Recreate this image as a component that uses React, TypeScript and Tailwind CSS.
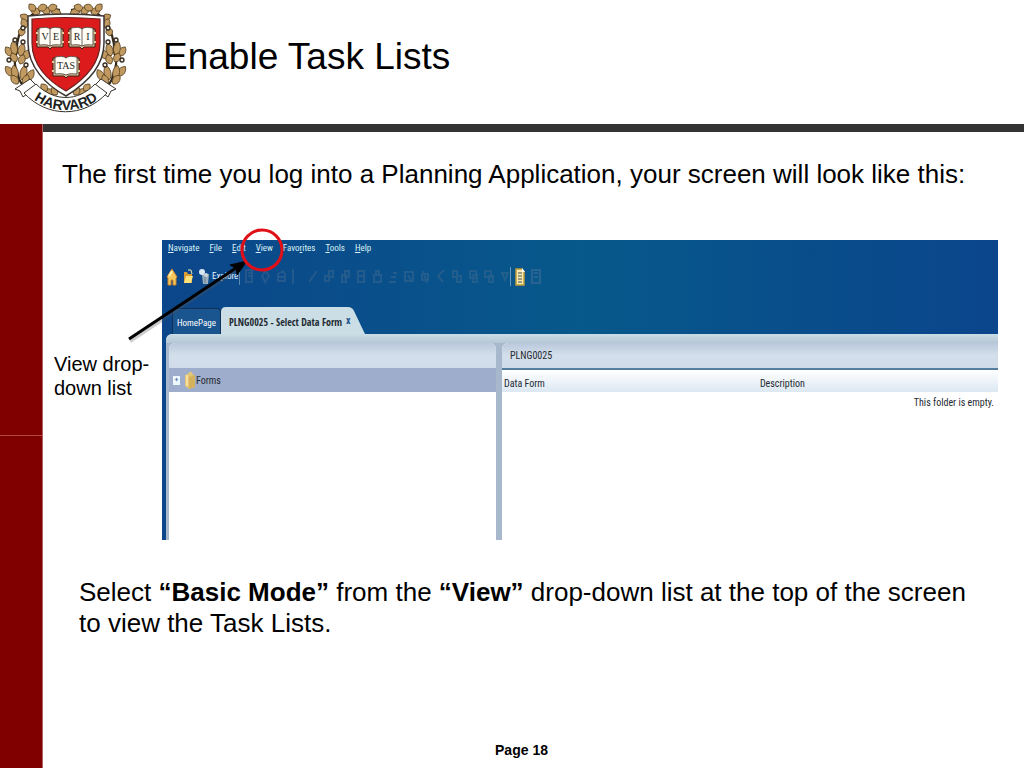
import type { ReactNode } from "react";

const NARROW = "font-['Roboto_Condensed','Liberation_Sans_Narrow','Open_Sans_Condensed_Light','Roboto',sans-serif]";

const MENU = [
  { before: "", key: "N", after: "avigate" },
  { before: "", key: "F", after: "ile" },
  { before: "", key: "E", after: "dit" },
  { before: "", key: "V", after: "iew" },
  { before: "Favo", key: "r", after: "ites" },
  { before: "", key: "T", after: "ools" },
  { before: "", key: "H", after: "elp" },
];

// x, y, rotation and length of each leaf on the left branch
const LEAVES = [
  [61, 14, -70, 11],
  [57, 6, -110, 10],
  [50, 13, -60, 10],
  [47, 6, -110, 10],
  [40, 13, -70, 10],
  [35, 11, -40, 9],
  [29, 20, -60, 10],
  [26, 28, -20, 10],
  [21, 36, 10, 9],
  [12, 56, -35, 11],
  [15, 55, -8, 14],
  [20, 56, 14, 13],
  [24, 59, 32, 11],
  [16, 62, -25, 10],
  [20, 64, 22, 10],
  [13, 76, -38, 12],
  [16, 79, -10, 14],
  [22, 80, 12, 15],
  [27, 81, 30, 13],
  [18, 84, -38, 11],
  [24, 85, 20, 11],
  [54, 94, -70, 11],
  [51, 97, -100, 10],
  [47, 91, -40, 9],
  [57, 95, -35, 9],
];

function Branch() {
  return (
    <g stroke="#5b4220" strokeWidth="0.8">
      <path
        d="M60 10C46 7 33 10 27 21C19 31 16 40 17 52C13 60 15 67 18 75C19 82 23 86 28 88"
        fill="none"
        stroke="#33291b"
        strokeWidth="2.2"
      />
      {LEAVES.map(([x, y, angle, length]) => (
        <path
          key={`${x}-${y}`}
          transform={`translate(${x} ${y}) rotate(${angle})`}
          d={`M0 0C-5 -3 -4 ${-length + 3} 0 ${-length}C4 ${-length + 3} 5 -3 0 0`}
          fill="#c09a60"
        />
      ))}
      <g fill="#f5ead8" stroke="#302a22" strokeWidth="1.3">
        <circle cx="23" cy="28" r="2" />
        <circle cx="15" cy="40" r="2" />
        <circle cx="23" cy="42" r="2" />
        <circle cx="9" cy="60" r="2" />
        <circle cx="26" cy="65" r="2" />
      </g>
    </g>
  );
}

function Book({ x, y, letters }: { x: number; y: number; letters: string[] }) {
  return (
    <g transform={`translate(${x} ${y})`}>
      <path d="M-13 -8H13V10H2L0 12L-2 10H-13Z" fill="#d8c59a" stroke="#3a211b" />
      <path
        d="M0 -8C-4 -11 -8 -9 -11 -9V8C-8 8 -4 7 0 9C4 7 8 8 11 8V-9C8 -9 4 -11 0 -8Z"
        fill="#fffdf5"
        stroke="#3b302a"
        strokeWidth="0.8"
      />
      {letters.length > 1 && <path d="M0 -8V9" stroke="#51443d" strokeWidth="0.8" />}
      <path d="M-14 -4H-12M-14 5H-12M12 -4H14M12 5H14" stroke="#e0cda0" strokeWidth="2" />
      {letters.map((letter, i) => (
        <text
          key={letter}
          x={letters.length > 1 ? i * 11 - 5 : 0}
          y="3"
          textAnchor="middle"
          className="font-['Liberation_Serif',serif] text-[10px]"
          fill="#252525"
        >
          {letter}
        </text>
      ))}
    </g>
  );
}

function Crest() {
  return (
    <svg viewBox="0 0 130 116" className="h-[116px] w-[130px] shrink-0" role="img" aria-label="Harvard crest">
      <Branch />
      <g transform="translate(131 0) scale(-1 1)">
        <Branch />
      </g>

      <path
        d="M28 16Q65 12 104 16V43C104 67 84 85 66 96C46 85 28 67 28 43Z"
        fill="#fff"
        stroke="#3b3634"
        strokeWidth="1.5"
      />
      <path
        d="M32 19Q65 16 100 19V43C100 65 82 81 66 91C48 81 32 65 32 43Z"
        fill="#dc1c1c"
        stroke="#682020"
        strokeWidth="1.2"
      />
      <Book x={50} y={37} letters={["V", "E"]} />
      <Book x={82} y={37} letters={["R", "I"]} />
      <Book x={66} y={66} letters={["TAS"]} />

      <g fill="#fff" stroke="#39342c" strokeWidth="1">
        <path d="M30 79L15 89L20 91L23 97L37 86ZM101 79L116 89L111 91L108 97L94 86Z" />
        <path d="M36 84C54 102 78 102 95 84L107 93C84 118 47 118 24 93Z" />
      </g>
      <path id="motto" d="M28 95C50 115 82 115 104 95" fill="none" />
      <text fill="#211f1e" className="font-['Liberation_Sans',sans-serif] text-[14px] font-bold">
        <textPath href="#motto" startOffset="50%" textAnchor="middle">
          HARVARD
        </textPath>
      </text>
    </svg>
  );
}

const FADED_ICONS = [
  "M2 2h6v12H2zM4 5h3M4 8h3",
  "M2 8l4-5 3 5-4 6z",
  "M2 6l5-3 2 3v7H2zM2 9h7",
  "M1 1v15",
  "M1 14L9 3",
  "M1 8h4v5H1zM5 3h4v6H5z",
  "M2 7h4v7H2zM5 3h4v6H5z",
  "M2 3h6v11H2zM3 8h6",
  "M2 7h7v7H2zM4 7V3h3v4",
  "M5 5h4M3 9h5M1 14h7",
  "M1 4h8v9H1zM4 7l4 7",
  "M2 6h6v6H2zM3 3l4 12",
  "M8 2L2 8l5 6",
  "M1 3h4v6H1zM5 8h4v6H5z",
  "M2 3h6v7H2zM5 7h4v7H5z",
  "M1 3h6v6H1zM5 8h4v6H5z",
  "M2 5h6L5 12z",
];

function Toolbar() {
  return (
    <div className="mt-[6px] flex h-6 items-center pl-1 text-[#e5f4ff]">
      <div className="flex items-center gap-1">
        <button aria-label="Home">
          <svg viewBox="0 0 12 20" className="h-5 w-3">
            <path d="M1 11L6 3l5 8-1 1v7H7v-5H5v5H2v-7Z" fill="#f7c95c" stroke="#c9842c" />
            <path d="M3 10L6 5" stroke="#fff2b7" strokeWidth="2" />
          </svg>
        </button>
        <button aria-label="Open">
          <svg viewBox="0 0 12 20" className="h-5 w-3">
            <path d="M2 6h3l1 2h4v9H2Z" fill="#d99c34" />
            <path d="M2 17l2-7h7l-2 7Z" fill="#ffe17a" />
            <path d="M6 4h3l1 4" fill="none" stroke="#e7e8ba" />
          </svg>
        </button>
        <button className="flex items-center">
          <svg viewBox="0 0 12 20" className="h-5 w-3">
            <path d="M4 8h7l-1 10H5Z" fill="#9dafbc" />
            <path d="M7 9v8" stroke="#607c98" />
            <circle cx="4" cy="6" r="3" fill="#d9e7f2" />
            <circle cx="8" cy="9" r="2" fill="#c9d5dc" />
          </svg>
          <span className="w-[29px] pl-[2px] text-left text-[9px] leading-4">Explore</span>
        </button>
      </div>

      <div className="flex items-center gap-[6px] border-l border-[#598bb0] pl-1" aria-hidden="true">
        {FADED_ICONS.map((d) => (
          <svg key={d} viewBox="0 0 10 17" className="h-[17px] w-[10px] opacity-40">
            <path d={d} fill="none" stroke="#4a6f90" strokeWidth="2" />
          </svg>
        ))}
      </div>

      <button aria-label="Task list" className="border-l border-[#6998ba] pl-1">
        <svg viewBox="0 0 10 19" className="h-[19px] w-[10px]">
          <path d="M1 2h6l2 3v13H1Z" fill="#f9e8aa" stroke="#bd9c3b" strokeWidth="1.5" />
          <path d="M3 6h4M3 9h4M3 12h4M3 15h4" stroke="#344f5c" />
          <path d="M7 1v4h3" fill="#fff" />
        </svg>
      </button>
      <svg viewBox="0 0 10 17" className="ml-[6px] h-[17px] w-[10px] opacity-50" aria-hidden="true">
        <path d="M1 2h8v13H1zM3 5h4M3 9h4" fill="none" stroke="#4a7298" strokeWidth="2" />
      </svg>
    </div>
  );
}

function Tabs() {
  return (
    <div className="mt-auto flex items-end pl-[10px]">
      <button className="h-[26px] w-[49px] rounded-t border border-b-0 border-[#103159] bg-[#1a5590] pt-1 text-[9px] text-white">
        HomePage
      </button>
      <div className="relative h-[27px] w-[144px] text-[#1e2b32]">
        <svg
          viewBox="0 0 144 27"
          preserveAspectRatio="none"
          className="absolute inset-0 h-full w-full"
          aria-hidden="true"
        >
          <path d="M0 27V5Q0 0 5 0H127Q131 0 133 4L144 27Z" fill="#cbdde5" />
        </svg>
        <div className="relative flex h-full items-center gap-1 pt-1 pl-2">
          <button className="font-['Open_Sans_Condensed',sans-serif] text-[10px] font-bold whitespace-nowrap">
            PLNG0025 - Select Data Form
          </button>
          <button aria-label="Close tab" className="pb-1 text-[10px] font-bold text-[#20558b]">
            x
          </button>
        </div>
      </div>
    </div>
  );
}

function Workspace() {
  return (
    <div
      className={`flex h-[300px] min-w-0 flex-1 flex-col bg-linear-to-r from-[#0c468a] via-[#07588b] to-[#0b458b] ${NARROW}`}
    >
      <nav className="flex h-[18px] items-center gap-[10px] pl-[6px] text-[9px] text-[#d9f1f5]">
        {MENU.map(({ before, key, after }) => (
          <button key={key}>
            {before}
            <u>{key}</u>
            {after}
          </button>
        ))}
      </nav>
      <Toolbar />
      <Tabs />

      <div className="ml-1 flex h-[206px] flex-col rounded-tl-md bg-[#a8b8cc]">
        <div className="h-[9px] shrink-0 rounded-tl-md bg-linear-to-b from-[#cbdde5] to-[#b4c6d5]" />
        <div className="flex min-h-0 flex-1 gap-[6px] pl-[3px] text-[10px] text-[#262a32]">
          <section className="flex w-[327px] shrink-0 flex-col overflow-hidden rounded-t-md bg-white">
            <div className="h-[25px] bg-linear-to-b from-[#bac8dc] via-[#d3dfeb] to-[#d0dce9]" />
            <div className="flex h-6 items-center gap-1 bg-[#9eadcb] pl-1">
              <button
                aria-label="Expand Forms"
                className="flex h-[9px] w-[7px] items-center justify-center bg-[#edf7ff] text-[8px] leading-none text-[#315989]"
              >
                +
              </button>
              <div className="flex items-center">
                <svg viewBox="0 0 12 19" className="h-[19px] w-3" aria-hidden="true">
                  <path d="M1 4l3-1 1-2h3l1 3 2 1v11l-6 2-4-3Z" fill="#e1c578" />
                  <path d="M5 6l6-2v12l-6 2Z" fill="#d4b35c" />
                  <path d="M3 4v11" stroke="#f7df9b" strokeWidth="2" />
                </svg>
                <span>Forms</span>
              </div>
            </div>
          </section>

          <section className="min-w-0 flex-1 overflow-hidden rounded-tl-md bg-white">
            <div className="flex h-[27px] items-center border-b-2 border-[#527e9f] bg-linear-to-b from-[#bac8dc] via-[#d3dfeb] to-[#cedbe8] pl-2">
              PLNG0025
            </div>
            <table className="w-full table-fixed text-left">
              <thead>
                <tr className="h-[22px] bg-linear-to-b from-white to-[#dce8f2]">
                  <th className="w-[52%] pt-1 pl-[2px] font-normal">Data Form</th>
                  <th className="pt-1 font-normal">Description</th>
                </tr>
              </thead>
              <tbody>
                <tr className="h-5">
                  <td colSpan={2} className="pr-1 text-right">
                    This folder is empty.
                  </td>
                </tr>
              </tbody>
            </table>
          </section>
        </div>
      </div>
    </div>
  );
}

// Ring and arrow that point out the View menu
function Callout() {
  return (
    <svg
      viewBox="0 0 240 124"
      className="pointer-events-none absolute -top-4 left-[66px] h-[124px] w-[240px]"
      aria-hidden="true"
    >
      <path d="M10 117L119 44" stroke="#555" strokeOpacity="0.3" strokeWidth="4" />
      <path d="M9 115L122 40" stroke="#000" strokeWidth="3" />
      <path d="M110 41L127 37L117 51L116 44Z" fill="#000" stroke="#000" />
      <circle cx="142" cy="26" r="20" fill="none" stroke="#e01018" strokeWidth="3" />
    </svg>
  );
}

function Paragraph({ className, children }: { className: string; children: ReactNode }) {
  return <p className={`text-[26px] leading-[31px] ${className}`}>{children}</p>;
}

export default function App() {
  return (
    <div className="flex min-h-screen flex-col bg-white font-['Liberation_Sans',Arial,sans-serif] text-black">
      <header className="flex h-[124px] items-start">
        <Crest />
        <h1 className="pt-[34px] pl-[33px] text-[37px] leading-[46px]">Enable Task Lists</h1>
      </header>

      <div className="flex flex-1">
        <aside className="flex w-[43px] shrink-0 flex-col border-r border-[#b06060] bg-[#800000]">
          <div className="h-[312px] border-b border-[#b04848]" />
        </aside>

        <main className="flex min-w-0 flex-1 flex-col border-t-8 border-[#333]">
          <Paragraph className="mt-[27px] pl-[19px]">
            The first time you log into a Planning Application, your screen will look like this:
          </Paragraph>

          <div className="relative mt-[50px] mr-[26px] ml-[11px] flex">
            <p className="w-[108px] shrink-0 pt-[112px] text-[20px] leading-6">
              View drop-
              <br />
              down list
            </p>
            <Workspace />
            <Callout />
          </div>

          <Paragraph className="mt-[37px] mr-10 ml-9">
            Select <strong>“Basic Mode”</strong> from the <strong>“View”</strong> drop-down list at the top of the
            screen to view the Task Lists.
          </Paragraph>

          <footer className="mt-auto pr-[24px] pb-2 text-center text-[14px] leading-5 font-bold">Page 18</footer>
        </main>
      </div>
    </div>
  );
}
